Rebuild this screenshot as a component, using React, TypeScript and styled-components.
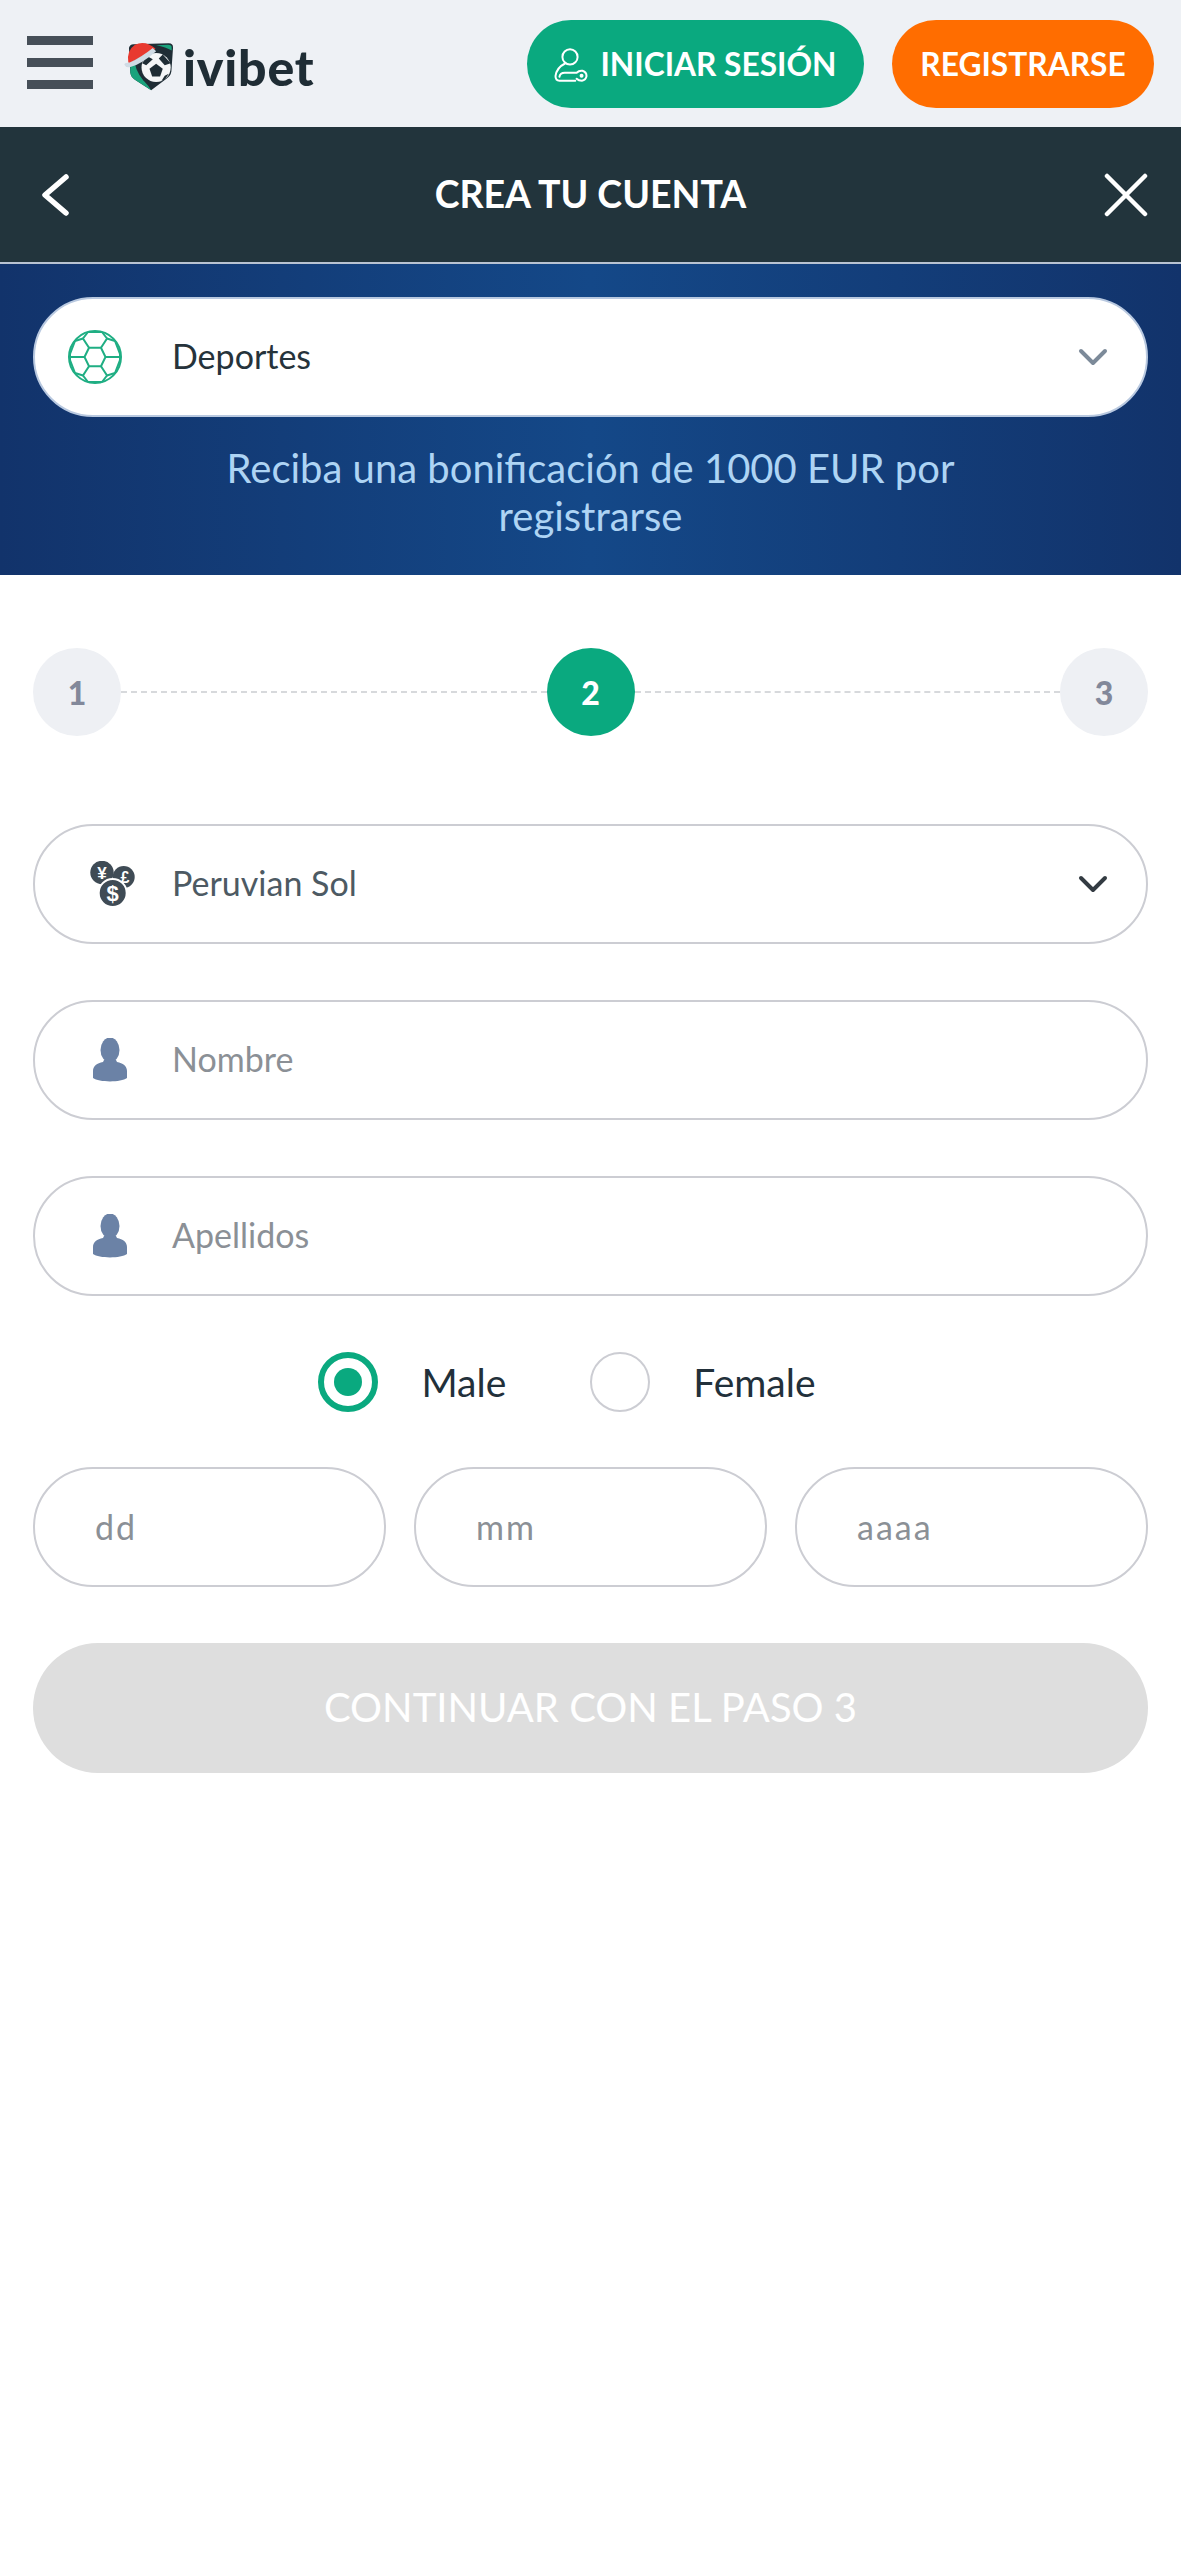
import React from 'react';
import styled, { createGlobalStyle } from 'styled-components';

const GlobalStyle = createGlobalStyle`
  html, body {
    margin: 0;
    padding: 0;
    background: #fff;
    font-family: "Lato", "Noto Sans", sans-serif;
  }
  * { box-sizing: border-box; }
`;

const Page = styled.div`
  width: 1181px;
  min-height: 2560px;
  background: #fff;
`;

const TopBar = styled.header`
  height: 127px;
  background: #eef1f5;
  display: flex;
  align-items: center;
  padding: 1px 27px 0;
`;

const Burger = styled.div`
  width: 66px;
  display: flex;
  flex-direction: column;
  gap: 13px;
  margin-bottom: 3px;
  > span {
    display: block;
    height: 9px;
    background: #464f58;
  }
`;

const Logo = styled.div`
  display: flex;
  align-items: center;
  margin: 5px 0 0 30px;
  gap: 7px;
`;

const LogoWord = styled.span`
  font-family: "Lato", sans-serif;
  font-weight: 900;
  font-size: 50px;
  line-height: 1;
  color: #1f2d35;
  letter-spacing: 0.8px;
`;

const TopActions = styled.div`
  margin-left: auto;
  display: flex;
  gap: 28px;
`;

const TopButton = styled.div<{ $bg: string; $width: number }>`
  width: ${p => p.$width}px;
  height: 88px;
  border-radius: 44px;
  background: ${p => p.$bg};
  color: #fff;
  display: flex;
  align-items: center;
  justify-content: center;
  gap: 12px;
  font-weight: 700;
  font-size: 31.7px;
  white-space: nowrap;
`;

const NavBar = styled.div`
  height: 137px;
  background: #22343c;
  border-bottom: 2px solid #b9c3d2;
  display: flex;
  align-items: center;
  justify-content: space-between;
  padding: 0 33px 0 40px;
`;

const NavTitle = styled.div`
  color: #fff;
  font-weight: 700;
  font-size: 37.5px;
  flex: 1;
  text-align: center;
  margin-left: 5px;
  padding-bottom: 3px;
`;

const Banner = styled.section`
  height: 311px;
  padding: 33px 33px 0;
  background: linear-gradient(90deg, #12336b 0%, #144888 50%, #12336b 100%);
`;

const Field = styled.div<{ $bordered?: boolean }>`
  height: 120px;
  border-radius: 60px;
  background: #fff;
  border: 2px solid ${p => (p.$bordered ? '#cccdd3' : '#b9c9e0')};
  display: flex;
  align-items: center;
  padding: 0 38px 0 0;
`;

const FieldIcon = styled.div<{ $sport?: boolean }>`
  width: 137px;
  display: flex;
  justify-content: center;
  padding: ${p => (p.$sport ? '0 17px 0 0' : '0 0 0 12px')};
  flex: none;
`;

const FieldText = styled.span<{ $color: string }>`
  flex: 1;
  font-size: 34px;
  padding-bottom: 3px;
  color: ${p => p.$color};
`;

const BannerText = styled.p`
  margin: 27px auto 0;
  width: 800px;
  text-align: center;
  font-size: 40px;
  line-height: 48px;
  color: #aed4f4;
`;

const Form = styled.div`
  padding: 73px 33px 0;
  display: flex;
  flex-direction: column;
`;

const Steps = styled.div`
  display: flex;
  align-items: center;
  margin-bottom: 88px;
`;

const StepCircle = styled.div<{ $active?: boolean }>`
  width: 88px;
  height: 88px;
  border-radius: 50%;
  flex: none;
  display: flex;
  align-items: center;
  justify-content: center;
  font-weight: 900;
  font-size: 32px;
  background: ${p => (p.$active ? '#0aa97f' : '#eef0f4')};
  color: ${p => (p.$active ? '#fff' : '#82889a')};
`;

const StepLine = styled.div`
  flex: 1;
  border-top: 2px dashed #d7d9dc;
`;

const Fields = styled.div`
  display: flex;
  flex-direction: column;
  gap: 56px;
`;

const GenderRow = styled.div`
  display: flex;
  justify-content: center;
  align-items: center;
  margin: 56px 0 55px;
  height: 60px;
`;

const Radio = styled.div<{ $checked?: boolean }>`
  width: 60px;
  height: 60px;
  border-radius: 50%;
  border: ${p => (p.$checked ? '6px solid #0aa97f' : '2px solid #cccdd3')};
  display: flex;
  align-items: center;
  justify-content: center;
  > span {
    width: 28px;
    height: 28px;
    border-radius: 50%;
    background: #0aa97f;
  }
`;

const GenderLabel = styled.span`
  font-size: 39px;
  color: #22303a;
  margin-left: 43px;
  margin-right: 84px;
  &:last-child { margin-right: 47px; }
`;

const DateRow = styled.div`
  display: grid;
  grid-template-columns: repeat(3, 1fr);
  gap: 28px;
  margin-bottom: 56px;
`;

const DateField = styled.div`
  height: 120px;
  border-radius: 60px;
  border: 2px solid #cccdd3;
  display: flex;
  align-items: center;
  padding: 0 0 2px 60px;
  font-size: 34px;
  letter-spacing: 2px;
  color: #8b9096;
`;

const SubmitButton = styled.div`
  height: 130px;
  border-radius: 65px;
  background: #dedede;
  color: #fff;
  display: flex;
  align-items: center;
  justify-content: center;
  padding-bottom: 2px;
  font-size: 40px;
`;

// coordinates below were read off the 3x zoom of the logo
const ShieldLogo = () => (
  <svg width="53" height="53" viewBox="70 60 160 160">
    <path d="M88 84 Q90 74 102 73 L208 70 Q222 70 221 84 L216 155 Q214 168 202 176 L155 212 L106 180 Q94 172 92 158 Z" fill="#1f2d35" />
    <path d="M170 76 L206 74 Q218 74 217 84 L217 92 Q200 82 170 76 Z" fill="#1aa37c" />
    <path d="M92 135 L106 132 Q112 165 146 198 L155 212 L106 180 Q94 172 92 158 Z" fill="#1aa37c" />
    <circle cx="170" cy="143" r="44" fill="#f4f6f7" />
    <path d="M170 132 L190 147 L182 170 L158 170 L150 147 Z" fill="#1f2d35" />
    <path d="M142 108 L160 118 L140 136 L128 130 Z M190 104 L214 130 L196 136 L178 116 Z M128 170 L144 180 L148 188 L132 182 Z M196 168 L208 162 L196 180 L186 184 Z" fill="#1f2d35" />
    <path d="M86 128 Q80 92 106 74 Q138 60 168 86 L160 94 Q120 112 90 130 Z" fill="#e8392f" />
    <path d="M74 134 Q76 128 90 128 Q125 112 160 84 L170 94 Q150 112 128 126 Q110 138 90 142 Q78 144 74 134 Z" fill="#cfdbe4" />
  </svg>
);

const LoginIcon = () => (
  <svg width="34" height="35" viewBox="44 50 102 106" fill="none" stroke="#fff" strokeWidth="6" strokeLinecap="round" strokeLinejoin="round">
    <circle cx="92" cy="80" r="23" />
    <path d="M77 100 Q52 112 48 138 Q48 152 60 152 L108 152" />
    <path d="M60 140 Q62 128 76 128 L112 128 Q120 120 130 122 Q142 126 142 138 Q140 150 128 152 Q118 152 112 146" />
    <circle cx="127" cy="137" r="3" />
  </svg>
);

const BackIcon = () => (
  <svg width="32" height="48" viewBox="0 0 32 48" fill="none" stroke="#fff" strokeWidth="5.5" strokeLinecap="round" strokeLinejoin="round">
    <path d="M26 6 L5 24 L26 42" />
  </svg>
);

const CloseIcon = () => (
  <svg width="44" height="44" viewBox="0 0 44 44" fill="none" stroke="#fff" strokeWidth="4.5" strokeLinecap="round">
    <path d="M3 3 L41 41 M41 3 L3 41" />
  </svg>
);

const BallIcon = () => (
  <svg width="56" height="56" viewBox="-28 -28 56 56" fill="none" stroke="#1fae83" strokeWidth="2">
    <circle cx="0" cy="0" r="26" />
    <path d="M-10.5 0 L-6 -9.3 L6 -9.3 L10.5 0 L6 9.3 L-6 9.3 Z" />
    <path d="M-6 -9.3 L-12 -18.5 L-7 -25 M6 -9.3 L12 -18.5 L7 -25 M-7 -25 L7 -25" />
    <path d="M-6 9.3 L-12 18.5 L-7 25 M6 9.3 L12 18.5 L7 25 M-7 25 L7 25" />
    <path d="M-12 -18.5 L-20 -16 M12 -18.5 L20 -16 M-12 18.5 L-20 16 M12 18.5 L20 16" />
    <path d="M-20 -16 L-25 -3 L-25 3 L-20 16 M20 -16 L25 -3 L25 3 L20 16" />
    <path d="M-10.5 0 L-25 0 M10.5 0 L25 0" />
  </svg>
);

const CurrencyIcon = () => (
  <svg width="50" height="46" viewBox="-5 0 50 46">
    <g fontFamily="'Liberation Sans', sans-serif" fontWeight="700" textAnchor="middle" fill="#fff">
      <circle cx="12" cy="11.5" r="11.7" fill="#3f4b55" />
      <text x="12" y="17.5" fontSize="17">¥</text>
      <circle cx="33.7" cy="16" r="11" fill="#3f4b55" />
      <text x="35" y="22" fontSize="16">£</text>
      <circle cx="22.7" cy="32" r="14" fill="#3f4b55" stroke="#fff" strokeWidth="2" />
      <text x="22.7" y="40" fontSize="22">$</text>
    </g>
  </svg>
);

const UserIcon = () => (
  <svg width="34" height="44" viewBox="0 0 34 44" fill="#6b82a6">
    <ellipse cx="17" cy="12" rx="9.5" ry="12.5" />
    <path d="M11 22 L23 22 L24 24 C30 25 34 28 34 33 L34 40 C28 44.5 6 44.5 0 40 L0 33 C0 28 4 25 10 24 Z" />
  </svg>
);

const Chevron = ({ color }: { color: string }) => (
  <svg width="30" height="18" viewBox="0 0 30 18" fill="none" stroke={color} strokeWidth="4" strokeLinecap="round" strokeLinejoin="round">
    <path d="M3 3 L15 15 L27 3" />
  </svg>
);

const App: React.FC = () => {
  return (
    <Page>
      <GlobalStyle />
      <TopBar>
        <Burger>
          <span />
          <span />
          <span />
        </Burger>
        <Logo>
          <ShieldLogo />
          <LogoWord>ivibet</LogoWord>
        </Logo>
        <TopActions>
          <TopButton $bg="#0aa97f" $width={337}>
            <LoginIcon />
            INICIAR SESIÓN
          </TopButton>
          <TopButton $bg="#ff6d00" $width={262}>REGISTRARSE</TopButton>
        </TopActions>
      </TopBar>
      <NavBar>
        <BackIcon />
        <NavTitle>CREA TU CUENTA</NavTitle>
        <CloseIcon />
      </NavBar>
      <Banner>
        <Field>
          <FieldIcon $sport><BallIcon /></FieldIcon>
          <FieldText $color="#26333b">Deportes</FieldText>
          <Chevron color="#7c8a99" />
        </Field>
        <BannerText>Reciba una bonificación de 1000 EUR por registrarse</BannerText>
      </Banner>
      <Form>
        <Steps>
          <StepCircle>1</StepCircle>
          <StepLine />
          <StepCircle $active>2</StepCircle>
          <StepLine />
          <StepCircle>3</StepCircle>
        </Steps>
        <Fields>
          <Field $bordered>
            <FieldIcon><CurrencyIcon /></FieldIcon>
            <FieldText $color="#4d5a63">Peruvian Sol</FieldText>
            <Chevron color="#333b42" />
          </Field>
          <Field $bordered>
            <FieldIcon><UserIcon /></FieldIcon>
            <FieldText $color="#8b9096">Nombre</FieldText>
          </Field>
          <Field $bordered>
            <FieldIcon><UserIcon /></FieldIcon>
            <FieldText $color="#8b9096">Apellidos</FieldText>
          </Field>
        </Fields>
        <GenderRow>
          <Radio $checked><span /></Radio>
          <GenderLabel>Male</GenderLabel>
          <Radio />
          <GenderLabel>Female</GenderLabel>
        </GenderRow>
        <DateRow>
          <DateField>dd</DateField>
          <DateField>mm</DateField>
          <DateField>aaaa</DateField>
        </DateRow>
        <SubmitButton>CONTINUAR CON EL PASO 3</SubmitButton>
      </Form>
    </Page>
  );
};

export default App;
